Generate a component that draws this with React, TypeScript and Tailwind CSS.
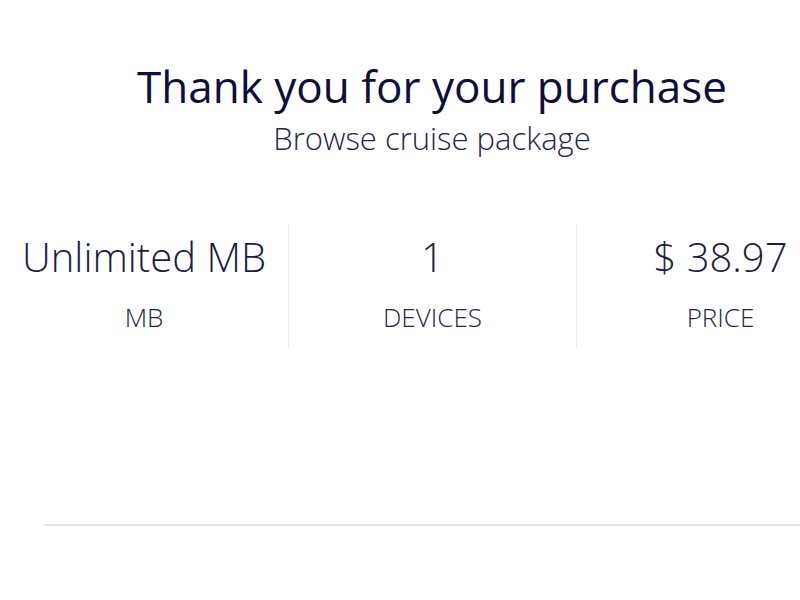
import React from "react";

interface Stat {
  value: string;
  label: string;
}

const stats: Stat[] = [
  { value: "Unlimited MB", label: "MB" },
  { value: "1", label: "DEVICES" },
  { value: "$ 38.97", label: "PRICE" },
];

// App component
export default function App() {
  return (
    <div
      className="w-[800px] h-[600px] overflow-hidden bg-white text-[#12123d]"
      style={{ fontFamily: '"Open Sans", "Liberation Sans", sans-serif' }}
    >
      <div className="w-[864px] flex flex-col">
        <h1 className="pt-[60px] text-center text-[44px] leading-[52px] font-normal text-[#0e0e3a]">
          Thank you for your purchase
        </h1>
        <p className="mt-[7px] text-center text-[31px] leading-[38px] font-light text-[#25254a]">
          Browse cruise package
        </p>
        <StatsRow stats={stats} />
        <div className="mt-[177px] ml-[44px] h-[2px] bg-[#e3e3e3]" />
      </div>
    </div>
  );
}

// StatsRow component
function StatsRow({ stats }: { stats: Stat[] }) {
  return (
    <div className="mt-[68px] grid grid-cols-3 h-[122px]">
      {stats.map((s, i) => (
        <div
          key={s.label}
          className={
            i === 0
              ? "flex flex-col items-center pt-[8px]"
              : "flex flex-col items-center pt-[8px] border-l border-[#ececec]"
          }
        >
          <span className="text-[40px] leading-[48px] font-light text-[#1c1c42]">
            {s.value}
          </span>
          <span className="mt-[19px] text-[26px] leading-[34px] font-light text-[#25254a]">
            {s.label}
          </span>
        </div>
      ))}
    </div>
  );
}
